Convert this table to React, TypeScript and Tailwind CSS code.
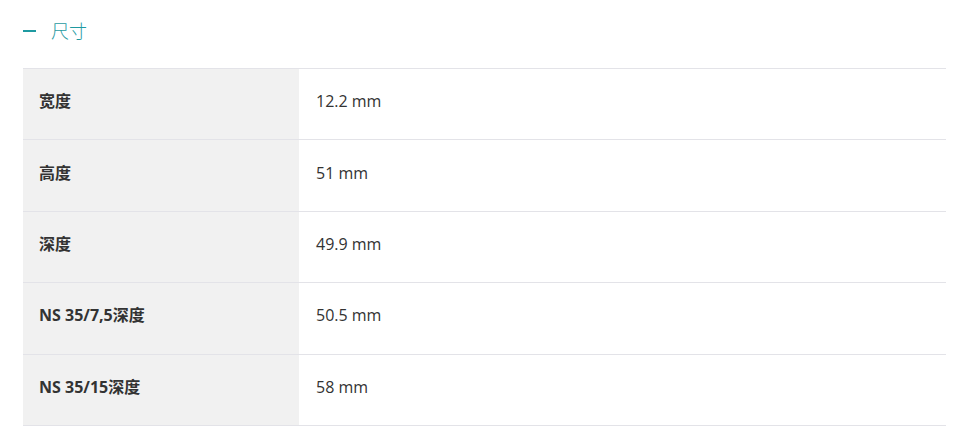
const rows = [
  { label: "宽度", value: "12.2 mm" },
  { label: "高度", value: "51 mm" },
  { label: "深度", value: "49.9 mm" },
  { label: "NS 35/7,5深度", value: "50.5 mm" },
  { label: "NS 35/15深度", value: "58 mm" },
];

const App = () => {
  return (
    <div className="w-[961px] h-[442px] bg-white pl-[23px] pr-[15px] pt-[19px] font-['Open_Sans','Noto_Sans_CJK_SC',sans-serif] text-[#333]">
      <div className="flex items-center h-[24px]">
        <span className="block w-[13px] h-[2px] bg-[#1f9aa1]" />
        <span className="ml-[15px] text-[18px] font-light text-[#1f9aa1] leading-none">尺寸</span>
      </div>
      <div className="mt-[25px] border-t border-[#e3e3e8]">
        {rows.map((r) => (
          <div key={r.label} className="flex h-[71.4px] border-b border-[#e3e3e8]">
            <div className="w-[276px] bg-[#f1f1f1] flex items-center pl-[16px] pb-[6px] text-[16px] font-bold">
              {r.label}
            </div>
            <div className="flex-1 flex items-center pl-[17px] pb-[6px] text-[16px]">
              {r.value}
            </div>
          </div>
        ))}
      </div>
    </div>
  );
};

export default App;
